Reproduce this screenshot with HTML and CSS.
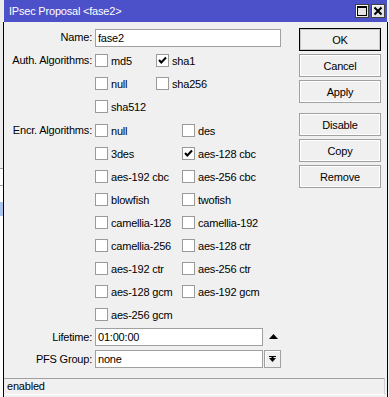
FILE: index.html
```html
<!DOCTYPE html>
<html lang="en">
<head>
  <meta charset="UTF-8">
  <meta name="viewport" content="width=device-width, initial-scale=1.0">
  <title>IPsec Proposal</title>
  <link rel="stylesheet" href="styles.css">
</head>
<body>
  <div class="desk">
    <div class="desk-top"></div>
    <div class="desk-row"></div>
    <div class="desk-sel"></div>
  </div>

  <div class="window">
    <div class="titlebar">
      <span class="title">IPsec Proposal &lt;fase2&gt;</span>
      <div class="title-btns">
        <span class="tbtn">
          <svg width="10" height="10" viewBox="0 0 10 10"><rect x="0.5" y="0.5" width="9" height="9" fill="none" stroke="#000"/><rect x="0" y="0" width="10" height="2" fill="#000"/></svg>
        </span>
        <span class="tbtn">
          <svg width="10" height="10" viewBox="0 0 10 10"><path d="M1.5 1.5 L8.5 8.5 M8.5 1.5 L1.5 8.5" stroke="#000" stroke-width="2"/></svg>
        </span>
      </div>
    </div>

    <div class="frame">
      <div class="main">
        <div class="form">
          <div class="field">
            <label>Name:</label>
            <div class="control"><input class="text wide" type="text" value="fase2"></div>
          </div>

          <div class="field">
            <label>Auth. Algorithms:</label>
            <div class="checks auth">
              <div class="check"><span class="box"></span>md5</div>
              <div class="check"><span class="box on"><svg width="11" height="11" viewBox="0 0 11 11"><path d="M2 5 L4.3 7.5 L9 2.5" fill="none" stroke="#000" stroke-width="2"/></svg></span>sha1</div>
              <div class="check"><span class="box"></span>null</div>
              <div class="check"><span class="box"></span>sha256</div>
              <div class="check"><span class="box"></span>sha512</div>
            </div>
          </div>

          <div class="field encr">
            <label>Encr. Algorithms:</label>
            <div class="checks encr-list">
              <div class="check"><span class="box"></span>null</div>
              <div class="check"><span class="box"></span>des</div>
              <div class="check"><span class="box"></span>3des</div>
              <div class="check"><span class="box on"><svg width="11" height="11" viewBox="0 0 11 11"><path d="M2 5 L4.3 7.5 L9 2.5" fill="none" stroke="#000" stroke-width="2"/></svg></span>aes-128 cbc</div>
              <div class="check"><span class="box"></span>aes-192 cbc</div>
              <div class="check"><span class="box"></span>aes-256 cbc</div>
              <div class="check"><span class="box"></span>blowfish</div>
              <div class="check"><span class="box"></span>twofish</div>
              <div class="check"><span class="box"></span>camellia-128</div>
              <div class="check"><span class="box"></span>camellia-192</div>
              <div class="check"><span class="box"></span>camellia-256</div>
              <div class="check"><span class="box"></span>aes-128 ctr</div>
              <div class="check"><span class="box"></span>aes-192 ctr</div>
              <div class="check"><span class="box"></span>aes-256 ctr</div>
              <div class="check"><span class="box"></span>aes-128 gcm</div>
              <div class="check"><span class="box"></span>aes-192 gcm</div>
              <div class="check"><span class="box"></span>aes-256 gcm</div>
            </div>
          </div>

          <div class="field short">
            <label>Lifetime:</label>
            <div class="control">
              <input class="text narrow" type="text" value="01:00:00">
              <svg class="up" width="9" height="5" viewBox="0 0 9 5"><path d="M0 5 L4.5 0 L9 5 Z" fill="#000"/></svg>
            </div>
          </div>

          <div class="field short">
            <label>PFS Group:</label>
            <div class="control">
              <input class="text narrow" type="text" value="none">
              <span class="drop">
                <svg width="7" height="7" viewBox="0 0 7 7"><rect x="0" y="0" width="7" height="1" fill="#000"/><path d="M0 2 L7 2 L3.5 6 Z" fill="#000"/><rect x="2.5" y="1" width="2" height="2" fill="#000"/></svg>
              </span>
            </div>
          </div>
        </div>

        <div class="actions">
          <button class="btn default">OK</button>
          <button class="btn">Cancel</button>
          <button class="btn">Apply</button>
          <button class="btn group">Disable</button>
          <button class="btn">Copy</button>
          <button class="btn">Remove</button>
        </div>
      </div>

      <div class="status">enabled</div>
    </div>
  </div>
</body>
</html>
```

FILE: styles.css
```css
body {
  margin: 0;
  height: 397px;
  overflow: hidden;
  display: flex;
  background-color: #f0f0f0;
  font-family: "Liberation Sans", Arial, sans-serif;
  font-size: 11px;
  letter-spacing: -0.2px;
  color: #000;
}

.desk {
  width: 3px;
  display: flex;
  flex-direction: column;
  background-color: #fcfcfc;
}

.desk-top {
  height: 168px;
  background-color: #ececec;
  border-bottom: 1px solid #a0a0a0;
}

.desk-row {
  height: 16px;
  border-bottom: 1px solid #a0a0a0;
}

.desk-sel {
  height: 14px;
  margin-top: 16px;
  background-color: #a9c5ec;
}

.window {
  width: 385px;
  display: flex;
  flex-direction: column;
}

.titlebar {
  height: 22px;
  margin: 0 1px;
  padding: 0 2px 0 5px;
  display: flex;
  align-items: center;
  justify-content: space-between;
  background-color: #4c50c9;
}

.title {
  color: #fff;
  font-size: 11px;
  padding-bottom: 1px;
}

.title-btns {
  display: flex;
  gap: 2px;
}

.tbtn {
  width: 14px;
  height: 14px;
  box-sizing: border-box;
  display: flex;
  align-items: center;
  justify-content: center;
  background-color: #e4e4e4;
  border: 1px solid #404040;
  box-shadow: inset 1px 1px 0 #fff;
}

.frame {
  flex: 1;
  display: flex;
  flex-direction: column;
  border-left: 1px solid #000;
  border-right: 1px solid #000;
}

.main {
  display: flex;
}

.form {
  flex: 1;
  padding-top: 4px;
}

.field {
  display: grid;
  grid-template-columns: 88px 1fr;
  column-gap: 3px;
}

.field label {
  text-align: right;
  line-height: 23px;
  white-space: nowrap;
}

.field.encr {
  margin-top: 1px;
}

.field.short label {
  line-height: 22px;
}

.control {
  height: 23px;
  display: flex;
  align-items: center;
}

.field.short .control {
  height: 22px;
}

.text {
  height: 18px;
  box-sizing: border-box;
  padding: 0 2px;
  border: 1px solid #a0a0a0;
  background-color: #fff;
  font-family: inherit;
  font-size: 11px;
  letter-spacing: -0.2px;
  color: #000;
  outline: none;
}

.text.wide {
  width: 186px;
}

.text.narrow {
  width: 168px;
}

.up {
  margin-left: 6px;
  margin-bottom: 2px;
}

.drop {
  width: 17px;
  height: 18px;
  margin-left: 1px;
  box-sizing: border-box;
  display: flex;
  align-items: center;
  justify-content: center;
  border: 1px solid #a0a0a0;
  box-shadow: inset 1px 1px 0 #fff;
  background-color: #f0f0f0;
}

.checks {
  display: grid;
  grid-auto-rows: 23px;
}

.checks.auth {
  grid-template-columns: 61px auto;
}

.checks.encr-list {
  grid-template-columns: 87px auto;
}

.check {
  display: flex;
  align-items: center;
  gap: 3px;
  white-space: nowrap;
}

.box {
  width: 13px;
  height: 13px;
  box-sizing: border-box;
  display: flex;
  align-items: center;
  justify-content: center;
  border: 1px solid #9a9a9a;
  background-color: #fff;
}

.actions {
  width: 82px;
  margin: 6px 6px 0 0;
  display: flex;
  flex-direction: column;
  gap: 3px;
}

.btn {
  height: 23px;
  padding: 0;
  border: 1px solid #a0a0a0;
  box-shadow: inset 1px 1px 0 #fff, inset -1px -1px 0 #fff;
  background-color: #f0f0f0;
  font-family: inherit;
  font-size: 11px;
  letter-spacing: -0.2px;
  color: #000;
}

.btn.default {
  border-color: #000;
  box-shadow: inset 0 0 0 1px #c8c8c8;
}

.btn.group {
  margin-top: 7px;
}

.status {
  height: 17px;
  margin: 8px 2px 0 0;
  box-sizing: border-box;
  padding-left: 3px;
  line-height: 15px;
  border-top: 1px solid #a0a0a0;
  border-right: 1px solid #d0d0d0;
  border-bottom: 1px solid #fff;
}
```
